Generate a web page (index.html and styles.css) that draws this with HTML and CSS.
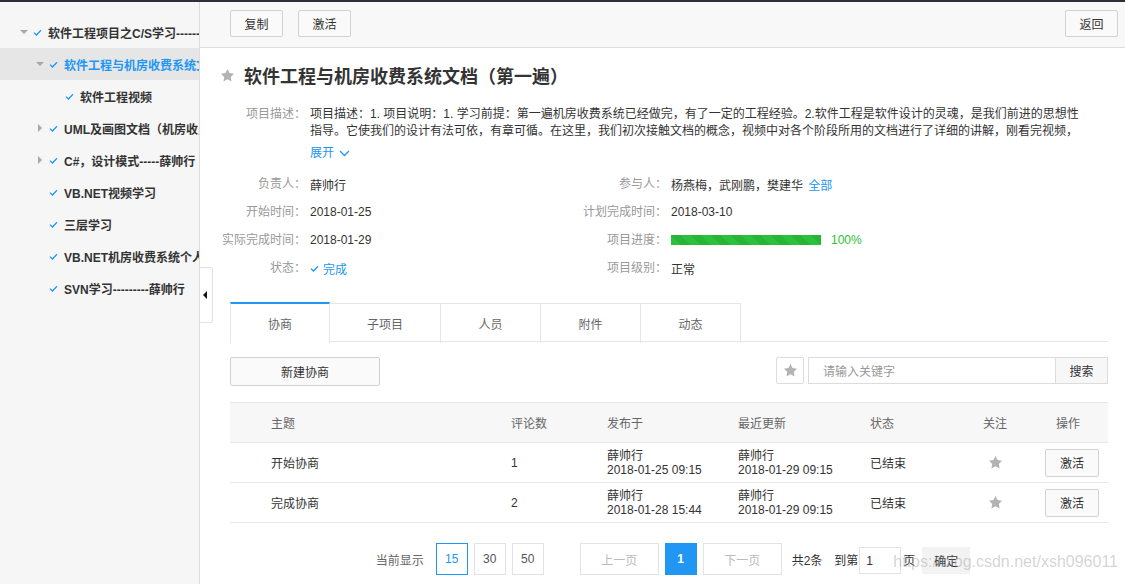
FILE: index.html
```html
<!DOCTYPE html>
<html lang="zh-CN">
<head>
<meta charset="utf-8">
<title>软件工程与机房收费系统文档（第一遍）</title>
<link rel="stylesheet" href="styles.css">
</head>
<body>
<div class="topline"></div>
<div class="app">
  <aside class="sidebar">
    <ul class="tree">
      <li class="node lv0"><span class="caret down"></span><span class="chk"><svg width="9" height="7" viewBox="0 0 9 7"><path d="M1 3.6L3.4 6L8 1.2" fill="none" stroke="#2196f3" stroke-width="1.3"/></svg></span><span class="label">软件工程项目之C/S学习---------薛帅行</span></li>
      <li class="node lv1 selected"><span class="caret down"></span><span class="chk"><svg width="9" height="7" viewBox="0 0 9 7"><path d="M1 3.6L3.4 6L8 1.2" fill="none" stroke="#2196f3" stroke-width="1.3"/></svg></span><span class="label">软件工程与机房收费系统文档（第一遍）</span></li>
      <li class="node lv2"><span class="chk"><svg width="9" height="7" viewBox="0 0 9 7"><path d="M1 3.6L3.4 6L8 1.2" fill="none" stroke="#2196f3" stroke-width="1.3"/></svg></span><span class="label">软件工程视频</span></li>
      <li class="node lv1"><span class="caret right"></span><span class="chk"><svg width="9" height="7" viewBox="0 0 9 7"><path d="M1 3.6L3.4 6L8 1.2" fill="none" stroke="#2196f3" stroke-width="1.3"/></svg></span><span class="label">UML及画图文档（机房收费系统）</span></li>
      <li class="node lv1"><span class="caret right"></span><span class="chk"><svg width="9" height="7" viewBox="0 0 9 7"><path d="M1 3.6L3.4 6L8 1.2" fill="none" stroke="#2196f3" stroke-width="1.3"/></svg></span><span class="label">C#，设计模式-----薛帅行</span></li>
      <li class="node lv1"><span class="caret none"></span><span class="chk"><svg width="9" height="7" viewBox="0 0 9 7"><path d="M1 3.6L3.4 6L8 1.2" fill="none" stroke="#2196f3" stroke-width="1.3"/></svg></span><span class="label">VB.NET视频学习</span></li>
      <li class="node lv1"><span class="caret none"></span><span class="chk"><svg width="9" height="7" viewBox="0 0 9 7"><path d="M1 3.6L3.4 6L8 1.2" fill="none" stroke="#2196f3" stroke-width="1.3"/></svg></span><span class="label">三层学习</span></li>
      <li class="node lv1"><span class="caret none"></span><span class="chk"><svg width="9" height="7" viewBox="0 0 9 7"><path d="M1 3.6L3.4 6L8 1.2" fill="none" stroke="#2196f3" stroke-width="1.3"/></svg></span><span class="label">VB.NET机房收费系统个人版</span></li>
      <li class="node lv1"><span class="caret none"></span><span class="chk"><svg width="9" height="7" viewBox="0 0 9 7"><path d="M1 3.6L3.4 6L8 1.2" fill="none" stroke="#2196f3" stroke-width="1.3"/></svg></span><span class="label">SVN学习---------薛帅行</span></li>
    </ul>
  </aside>
  <div class="collapse-handle"><span class="tri-left"></span></div>

  <main class="main">
    <div class="toolbar">
      <button class="btn btn-tool">复制</button>
      <button class="btn btn-tool">激活</button>
      <span class="spacer"></span>
      <button class="btn btn-tool">返回</button>
    </div>

    <div class="content">
      <h1 class="title">
        <svg class="star" width="15" height="15" viewBox="0 0 24 24"><polygon points="12,1.5 15.2,8.1 22.5,9.1 17.2,14.2 18.5,21.5 12,18 5.5,21.5 6.8,14.2 1.5,9.1 8.8,8.1" fill="#b3b3b3"/></svg>
        <span>软件工程与机房收费系统文档（第一遍）</span>
      </h1>

      <div class="desc">
        <div class="lbl">项目描述：</div>
        <div class="desc-body">
          <div class="desc-line">项目描述：1. 项目说明：1. 学习前提：第一遍机房收费系统已经做完，有了一定的工程经验。2.软件工程是软件设计的灵魂，是我们前进的思想性</div>
          <div class="desc-line">指导。它使我们的设计有法可依，有章可循。在这里，我们初次接触文档的概念，视频中对各个阶段所用的文档进行了详细的讲解，刚看完视频，</div>
          <a class="expand">展开 <svg width="11" height="7" viewBox="0 0 11 7"><path d="M1 1L5.5 5.5L10 1" fill="none" stroke="#2196f3" stroke-width="1.3"/></svg></a>
        </div>
      </div>

      <div class="info">
        <div class="lbl">负责人：</div><div class="val">薛帅行</div>
        <div class="lbl">参与人：</div><div class="val">杨燕梅，武刚鹏，樊建华 <a class="link">全部</a></div>
        <div class="lbl">开始时间：</div><div class="val">2018-01-25</div>
        <div class="lbl">计划完成时间：</div><div class="val">2018-03-10</div>
        <div class="lbl">实际完成时间：</div><div class="val">2018-01-29</div>
        <div class="lbl">项目进度：</div><div class="val progress-cell"><span class="bar"><span class="bar-fill" style="width:100%"></span></span><span class="pct">100%</span></div>
        <div class="lbl">状态：</div><div class="val status"><svg width="9" height="7" viewBox="0 0 9 7"><path d="M1 3.6L3.4 6L8 1.2" fill="none" stroke="#2196f3" stroke-width="1.3"/></svg> 完成</div>
        <div class="lbl">项目级别：</div><div class="val">正常</div>
      </div>

      <div class="tabs">
        <div class="tab active">协商</div>
        <div class="tab">子项目</div>
        <div class="tab">人员</div>
        <div class="tab">附件</div>
        <div class="tab">动态</div>
      </div>

      <div class="actions">
        <button class="btn btn-new">新建协商</button>
        <div class="search">
          <button class="btn btn-star"><svg width="15" height="15" viewBox="0 0 24 24"><polygon points="12,1.5 15.2,8.1 22.5,9.1 17.2,14.2 18.5,21.5 12,18 5.5,21.5 6.8,14.2 1.5,9.1 8.8,8.1" fill="#b3b3b3"/></svg></button>
          <div class="search-box">
            <span class="placeholder">请输入关键字</span>
          </div>
          <button class="btn btn-search">搜索</button>
        </div>
      </div>

      <div class="table">
        <div class="tr thead">
          <div class="td c1">主题</div>
          <div class="td c2">评论数</div>
          <div class="td c3">发布于</div>
          <div class="td c4">最近更新</div>
          <div class="td c5">状态</div>
          <div class="td c6">关注</div>
          <div class="td c7">操作</div>
        </div>
        <div class="tr">
          <div class="td c1">开始协商</div>
          <div class="td c2">1</div>
          <div class="td c3 two"><span>薛帅行</span><span>2018-01-25 09:15</span></div>
          <div class="td c4 two"><span>薛帅行</span><span>2018-01-29 09:15</span></div>
          <div class="td c5">已结束</div>
          <div class="td c6"><svg width="15" height="15" viewBox="0 0 24 24"><polygon points="12,1.5 15.2,8.1 22.5,9.1 17.2,14.2 18.5,21.5 12,18 5.5,21.5 6.8,14.2 1.5,9.1 8.8,8.1" fill="#b3b3b3"/></svg></div>
          <div class="td c7"><button class="btn btn-row">激活</button></div>
        </div>
        <div class="tr">
          <div class="td c1">完成协商</div>
          <div class="td c2">2</div>
          <div class="td c3 two"><span>薛帅行</span><span>2018-01-28 15:44</span></div>
          <div class="td c4 two"><span>薛帅行</span><span>2018-01-29 09:15</span></div>
          <div class="td c5">已结束</div>
          <div class="td c6"><svg width="15" height="15" viewBox="0 0 24 24"><polygon points="12,1.5 15.2,8.1 22.5,9.1 17.2,14.2 18.5,21.5 12,18 5.5,21.5 6.8,14.2 1.5,9.1 8.8,8.1" fill="#b3b3b3"/></svg></div>
          <div class="td c7"><button class="btn btn-row">激活</button></div>
        </div>
      </div>

      <div class="pager">
        <span class="pg-text">当前显示</span>
        <span class="pg-size active">15</span>
        <span class="pg-size">30</span>
        <span class="pg-size">50</span>
        <span class="pg-nav disabled">上一页</span>
        <span class="pg-num current">1</span>
        <span class="pg-nav disabled">下一页</span>
        <span class="pg-total">共2条</span>
        <span class="pg-goto">到第</span>
        <span class="pg-input">1</span>
        <span class="pg-unit">页</span>
        <span class="pg-ok">确定</span>
      </div>
    </div>
  </main>
  <div class="watermark">https://blog.csdn.net/xsh096011</div>
</div>
</body>
</html>
```

FILE: styles.css
```css
* { box-sizing: border-box; }
html, body { margin: 0; padding: 0; }
body {
  width: 1125px;
  height: 584px;
  overflow: hidden;
  font-family: "Liberation Sans", "Noto Sans CJK SC", sans-serif;
  font-size: 12px;
  color: #333;
  background: #fff;
}
.topline { height: 2px; background: #2b2e3b; }
.app {
  position: relative;
  display: flex;
  height: 582px;
}

/* sidebar */
.sidebar {
  width: 200px;
  flex: none;
  background: #f6f6f6;
  border-right: 1px solid #dcdcdc;
  padding-top: 14px;
  overflow: hidden;
}
.tree { list-style: none; margin: 0; padding: 0; }
.node {
  display: flex;
  align-items: center;
  height: 32px;
  white-space: nowrap;
  overflow: hidden;
  font-weight: bold;
  font-size: 12px;
  color: #333;
}
.node.lv0 { padding-left: 18px; }
.node.lv1 { padding-left: 34px; }
.node.lv2 { padding-left: 62px; }
.node.selected { background: #e6e6e6; color: #2196f3; }
.caret { width: 12px; height: 8px; flex: none; position: relative; }
.caret.down::before {
  content: ""; position: absolute; left: 2px; top: 2px;
  border-left: 4px solid transparent; border-right: 4px solid transparent;
  border-top: 4px solid #a8a8a8;
}
.caret.right::before {
  content: ""; position: absolute; left: 4px; top: 0;
  border-top: 4px solid transparent; border-bottom: 4px solid transparent;
  border-left: 4px solid #a8a8a8;
}
.chk { width: 14px; flex: none; display: flex; align-items: center; padding-left: 3px; }
.chk svg { display: block; }
.label { padding-left: 4px; }

.collapse-handle {
  position: absolute;
  left: 200px;
  top: 265px;
  width: 13px;
  height: 56px;
  background: #fff;
  border: 1px solid #e2e2e2;
  border-left: none;
  border-radius: 0 3px 3px 0;
  display: flex;
  align-items: center;
  justify-content: center;
  z-index: 2;
}
.tri-left {
  width: 0; height: 0;
  border-top: 4px solid transparent; border-bottom: 4px solid transparent;
  border-right: 4px solid #111;
  margin-left: -3px;
}

/* main */
.main { flex: 1; min-width: 0; display: flex; flex-direction: column; }
.toolbar {
  height: 46px;
  background: #f8f8f8;
  border-bottom: 1px solid #dedede;
  display: flex;
  align-items: flex-start;
  padding: 8px 7px 0 30px;
  gap: 15px;
}
.spacer { flex: 1; }
.btn {
  font-family: inherit;
  font-size: 12px;
  color: #333;
  background: #fafafa;
  border: 1px solid #d2d2d2;
  border-radius: 2px;
  padding: 0;
  margin: 0;
  cursor: pointer;
}
.btn-tool { width: 53px; height: 27px; }

.content { padding: 0 17px 0 0; }
.title {
  margin: 14px 0 0 20px;
  height: 26px;
  display: flex;
  align-items: center;
  gap: 9px;
  font-size: 18px;
  font-weight: bold;
  color: #333;
}
.title .star { flex: none; }

.desc { display: flex; margin-top: 18px; }
.lbl {
  width: 110px;
  flex: none;
  text-align: right;
  padding-right: 4px;
  color: #999;
  line-height: 17px;
}
.desc-body { flex: 1; min-width: 0; }
.desc-line { white-space: nowrap; overflow: hidden; line-height: 17px; color: #333; }
.expand {
  display: inline-flex;
  align-items: center;
  gap: 5px;
  margin-top: 4px;
  line-height: 18px;
  color: #2196f3;
  font-size: 12px;
}

.info {
  display: grid;
  grid-template-columns: 110px 250px 111px 1fr;
  grid-auto-rows: 28px;
  margin-top: 8px;
  align-items: center;
}
.info .lbl { width: auto; }
.val { color: #333; white-space: nowrap; }
.link { color: #2196f3; margin-left: 2px; }
.status { color: #2196f3; display: flex; align-items: center; gap: 4px; }
.progress-cell { display: flex; align-items: center; gap: 10px; }
.bar { width: 150px; height: 10px; background: #eee; display: block; }
.bar-fill {
  display: block;
  height: 100%;
  background-color: #2cc13b;
  background-image: linear-gradient(45deg, rgba(0,0,0,.07) 25%, transparent 25%, transparent 50%, rgba(0,0,0,.07) 50%, rgba(0,0,0,.07) 75%, transparent 75%, transparent);
  background-size: 20px 20px;
}
.pct { color: #2cc13b; font-size: 12px; }

/* tabs */
.tabs {
  display: flex;
  margin: 20px 0 0 30px;
  border-bottom: 1px solid #e6e6e6;
  height: 40px;
}
.tab {
  width: 100px;
  height: 40px;
  border: 1px solid #e6e6e6;
  border-left: none;
  border-bottom: none;
  display: flex;
  align-items: center;
  justify-content: center;
  color: #666;
  font-size: 12px;
  margin-top: 1px;
}
.tab:nth-child(2) { width: 111px; }
.tab.active {
  border-left: 1px solid #e6e6e6;
  border-top: 2px solid #2196f3;
  margin-top: 0;
  height: 41px;
  background: #fff;
  margin-bottom: -1px;
  padding-bottom: 1px;
}

/* actions */
.actions {
  display: flex;
  justify-content: space-between;
  align-items: flex-start;
  margin: 15px 0 0 30px;
}
.btn-new { width: 150px; height: 29px; }
.search { display: flex; align-items: center; }
.btn-star {
  width: 28px; height: 27px;
  background: #fff;
  border-color: #dcdcdc;
  display: flex; align-items: center; justify-content: center;
  margin-right: 4px;
}
.search-box {
  width: 247px; height: 27px;
  border: 1px solid #dcdcdc;
  border-right: none;
  display: flex; align-items: center;
  padding-left: 14px;
}
.placeholder { color: #999; }
.btn-search {
  width: 53px; height: 27px;
  border-color: #dcdcdc;
  border-radius: 0;
  background: #f7f7f7;
}

/* table */
.table {
  margin: 16px 0 0 30px;
  border-top: 1px solid #e8e8e8;
}
.tr {
  display: grid;
  grid-template-columns: 271px 96px 131px 132px 100px 70px 78px;
  height: 40px;
  border-bottom: 1px solid #e8e8e8;
  align-items: center;
}
.thead { background: #f7f7f7; color: #666; }
.td { padding-left: 10px; white-space: nowrap; }
.td.c1 { padding-left: 41px; }
.td.c6, .td.c7 { padding-left: 0; display: flex; justify-content: center; }
.thead .td.c7 { padding-right: 8px; }
.td.c7 { padding-left: 6px; }
.two { display: flex; flex-direction: column; line-height: 14px; }
.btn-row { width: 54px; height: 28px; }

/* pager */
.pager {
  display: flex;
  align-items: center;
  justify-content: center;
  height: 32px;
  margin: 20px 0 0 38px;
  color: #555;
}
.pg-text { margin-right: 12px; color: #666; }
.pg-size, .pg-num {
  width: 32px; height: 32px;
  border: 1px solid #e3e3e3;
  display: flex; align-items: center; justify-content: center;
  margin-right: 6px;
  color: #555;
}
.pg-size.active { border-color: #2196f3; color: #2196f3; }
.pg-size:nth-of-type(4) { margin-right: 36px; }
.pg-nav {
  width: 79px; height: 32px;
  border: 1px solid #e3e3e3;
  display: flex; align-items: center; justify-content: center;
  color: #bbb;
  margin-right: 6px;
}
.pg-num.current { background: #2196f3; border-color: #2196f3; color: #fff; font-weight: bold; }
.pg-nav:nth-of-type(7) { margin-right: 10px; }
.pg-total { margin-right: 12px; color: #333; }
.pg-goto { margin-right: 1px; color: #333; }
.pg-input {
  width: 42px; height: 27px;
  border: 1px solid #e3e3e3;
  display: flex; align-items: center;
  padding-left: 6px;
  margin-top: 3px;
  color: #333;
}
.pg-unit { margin: 0 7px 0 2px; color: #333; }
.pg-ok {
  width: 48px; height: 27px;
  background: #f3f3f3;
  display: flex; align-items: center; justify-content: center;
  color: #333;
  margin-top: 3px;
}

.watermark {
  position: absolute;
  right: 7px;
  bottom: 13px;
  font-size: 16px;
  color: rgba(160,160,160,0.45);
  pointer-events: none;
  font-family: "Liberation Sans", sans-serif;
}
```
